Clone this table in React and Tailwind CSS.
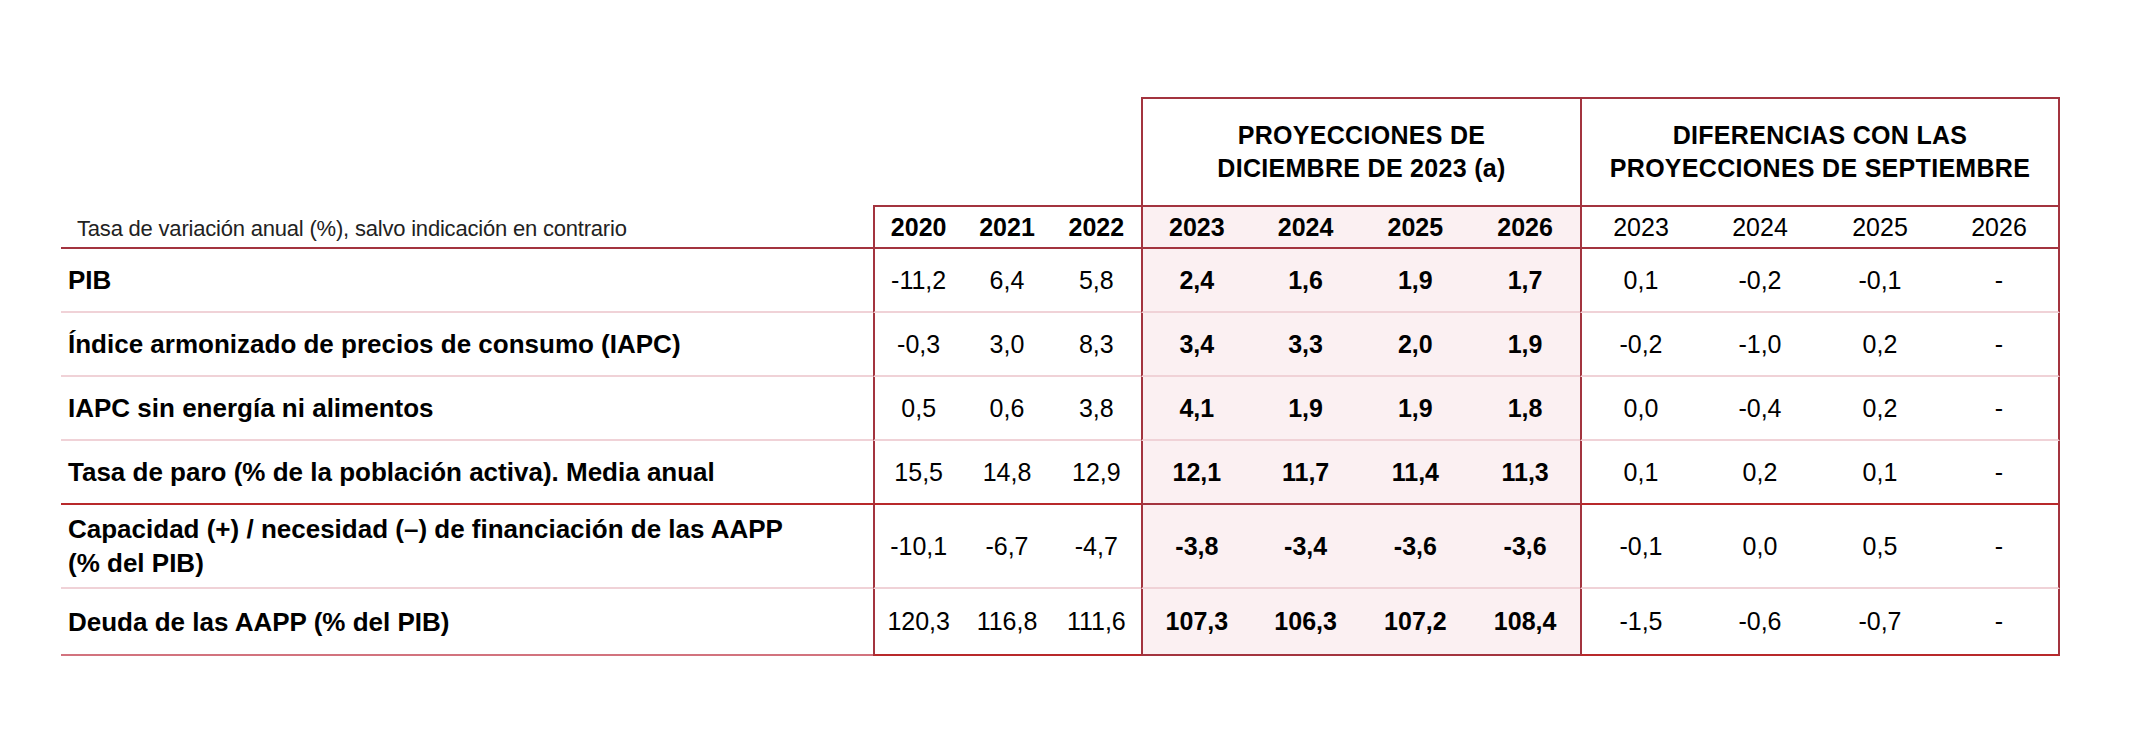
const cols =
  "grid grid-cols-[812px_repeat(3,89.33px)_repeat(4,109.75px)_repeat(4,120px)]";

const pink = { label: "border-b-[#f0d2d7]", hist: "border-b-[#f0d2d7]", proj: "border-b-[#f0d2d7]", diff: "border-b-[#f0d2d7]" };

const rows = [
  {
    label: ["PIB"],
    hist: ["-11,2", "6,4", "5,8"],
    proj: ["2,4", "1,6", "1,9", "1,7"],
    diff: ["0,1", "-0,2", "-0,1", "-"],
    h: "h-16",
    line: pink,
  },
  {
    label: ["Índice armonizado de precios de consumo (IAPC)"],
    hist: ["-0,3", "3,0", "8,3"],
    proj: ["3,4", "3,3", "2,0", "1,9"],
    diff: ["-0,2", "-1,0", "0,2", "-"],
    h: "h-16",
    line: pink,
  },
  {
    label: ["IAPC sin energía ni alimentos"],
    hist: ["0,5", "0,6", "3,8"],
    proj: ["4,1", "1,9", "1,9", "1,8"],
    diff: ["0,0", "-0,4", "0,2", "-"],
    h: "h-16",
    line: pink,
  },
  {
    label: ["Tasa de paro (% de la población activa). Media anual"],
    hist: ["15,5", "14,8", "12,9"],
    proj: ["12,1", "11,7", "11,4", "11,3"],
    diff: ["0,1", "0,2", "0,1", "-"],
    h: "h-16",
    line: { label: "border-b-[#b8292b]", hist: "border-b-[#b8292b]", proj: "border-b-[#a3343f]", diff: "border-b-[#b8292b]" },
  },
  {
    label: ["Capacidad (+) / necesidad (–) de financiación de las AAPP", "(% del PIB)"],
    hist: ["-10,1", "-6,7", "-4,7"],
    proj: ["-3,8", "-3,4", "-3,6", "-3,6"],
    diff: ["-0,1", "0,0", "0,5", "-"],
    h: "h-[84px]",
    line: pink,
  },
  {
    label: ["Deuda de las AAPP (% del PIB)"],
    hist: ["120,3", "116,8", "111,6"],
    proj: ["107,3", "106,3", "107,2", "108,4"],
    diff: ["-1,5", "-0,6", "-0,7", "-"],
    h: "h-[67px]",
    line: { label: "border-b-[#d2737e]", hist: "border-b-[#b8292b]", proj: "border-b-[#a3343f]", diff: "border-b-[#b8292b]" },
  },
];

const num = "flex items-center justify-center border-b-2 text-[25px] leading-none";

function YearsRow() {
  const hist = ["2020", "2021", "2022"];
  const years = ["2023", "2024", "2025", "2026"];
  const cell =
    "flex items-center justify-center border-t-2 border-b-2 border-[#a3343f] text-[25px] leading-none";
  return (
    <div className={`${cols} h-[44px]`}>
      <div className="flex items-center pl-[16px] pt-[4px] border-b-2 border-b-[#a3343f] text-[22px] text-[#222] tracking-[-0.2px]">
        Tasa de variación anual (%), salvo indicación en contrario
      </div>
      {hist.map((y, i) => (
        <div key={y} className={`${cell} font-bold ${i === 0 ? "border-l-2" : ""}`}>
          {y}
        </div>
      ))}
      {years.map((y, i) => (
        <div key={"p" + y} className={`${cell} font-bold bg-[#fbf0f2] ${i === 0 ? "border-l-2" : ""}`}>
          {y}
        </div>
      ))}
      {years.map((y, i) => (
        <div
          key={"d" + y}
          className={`${cell} ${i === 0 ? "border-l-2" : ""} ${i === 3 ? "border-r-2" : ""}`}
        >
          {y}
        </div>
      ))}
    </div>
  );
}

function DataRow({ row }) {
  return (
    <div className={`${cols} ${row.h}`}>
      <div className={`flex flex-col justify-center pl-[7px] border-b-2 ${row.line.label} text-[26px] font-bold leading-[34px]`}>
        {row.label.map((l) => (
          <span key={l}>{l}</span>
        ))}
      </div>
      {row.hist.map((v, i) => (
        <div
          key={"h" + i}
          className={`${num} ${row.line.hist} ${i === 0 ? "border-l-2 border-l-[#a3343f]" : ""}`}
        >
          {v}
        </div>
      ))}
      {row.proj.map((v, i) => (
        <div
          key={"p" + i}
          className={`${num} ${row.line.proj} font-bold bg-[#fbf0f2] ${i === 0 ? "border-l-2 border-l-[#a3343f]" : ""}`}
        >
          {v}
        </div>
      ))}
      {row.diff.map((v, i) => (
        <div
          key={"d" + i}
          className={`${num} ${row.line.diff} ${i === 0 ? "border-l-2 border-l-[#a3343f]" : ""} ${i === 3 ? "border-r-2 border-r-[#a3343f]" : ""}`}
        >
          {v}
        </div>
      ))}
    </div>
  );
}

export default function App() {
  return (
    <div className="w-[2140px] h-[742px] bg-white pt-[97px] pl-[61px] text-black font-['Liberation_Sans',Arial,sans-serif]">
      <div className={`${cols} h-[108px]`}>
        <div className="col-span-4" />
        <div className="col-span-4 flex flex-col items-center justify-center border-t-2 border-l-2 border-[#a3343f] text-[25px] font-bold leading-[33px] tracking-[0.3px]">
          <span>PROYECCIONES DE</span>
          <span>DICIEMBRE DE 2023 (a)</span>
        </div>
        <div className="col-span-4 flex flex-col items-center justify-center border-t-2 border-l-2 border-r-2 border-[#a3343f] text-[25px] font-bold leading-[33px] tracking-[0.3px]">
          <span>DIFERENCIAS CON LAS</span>
          <span>PROYECCIONES DE SEPTIEMBRE</span>
        </div>
      </div>
      <YearsRow />
      {rows.map((r, i) => (
        <DataRow key={i} row={r} />
      ))}
    </div>
  );
}
